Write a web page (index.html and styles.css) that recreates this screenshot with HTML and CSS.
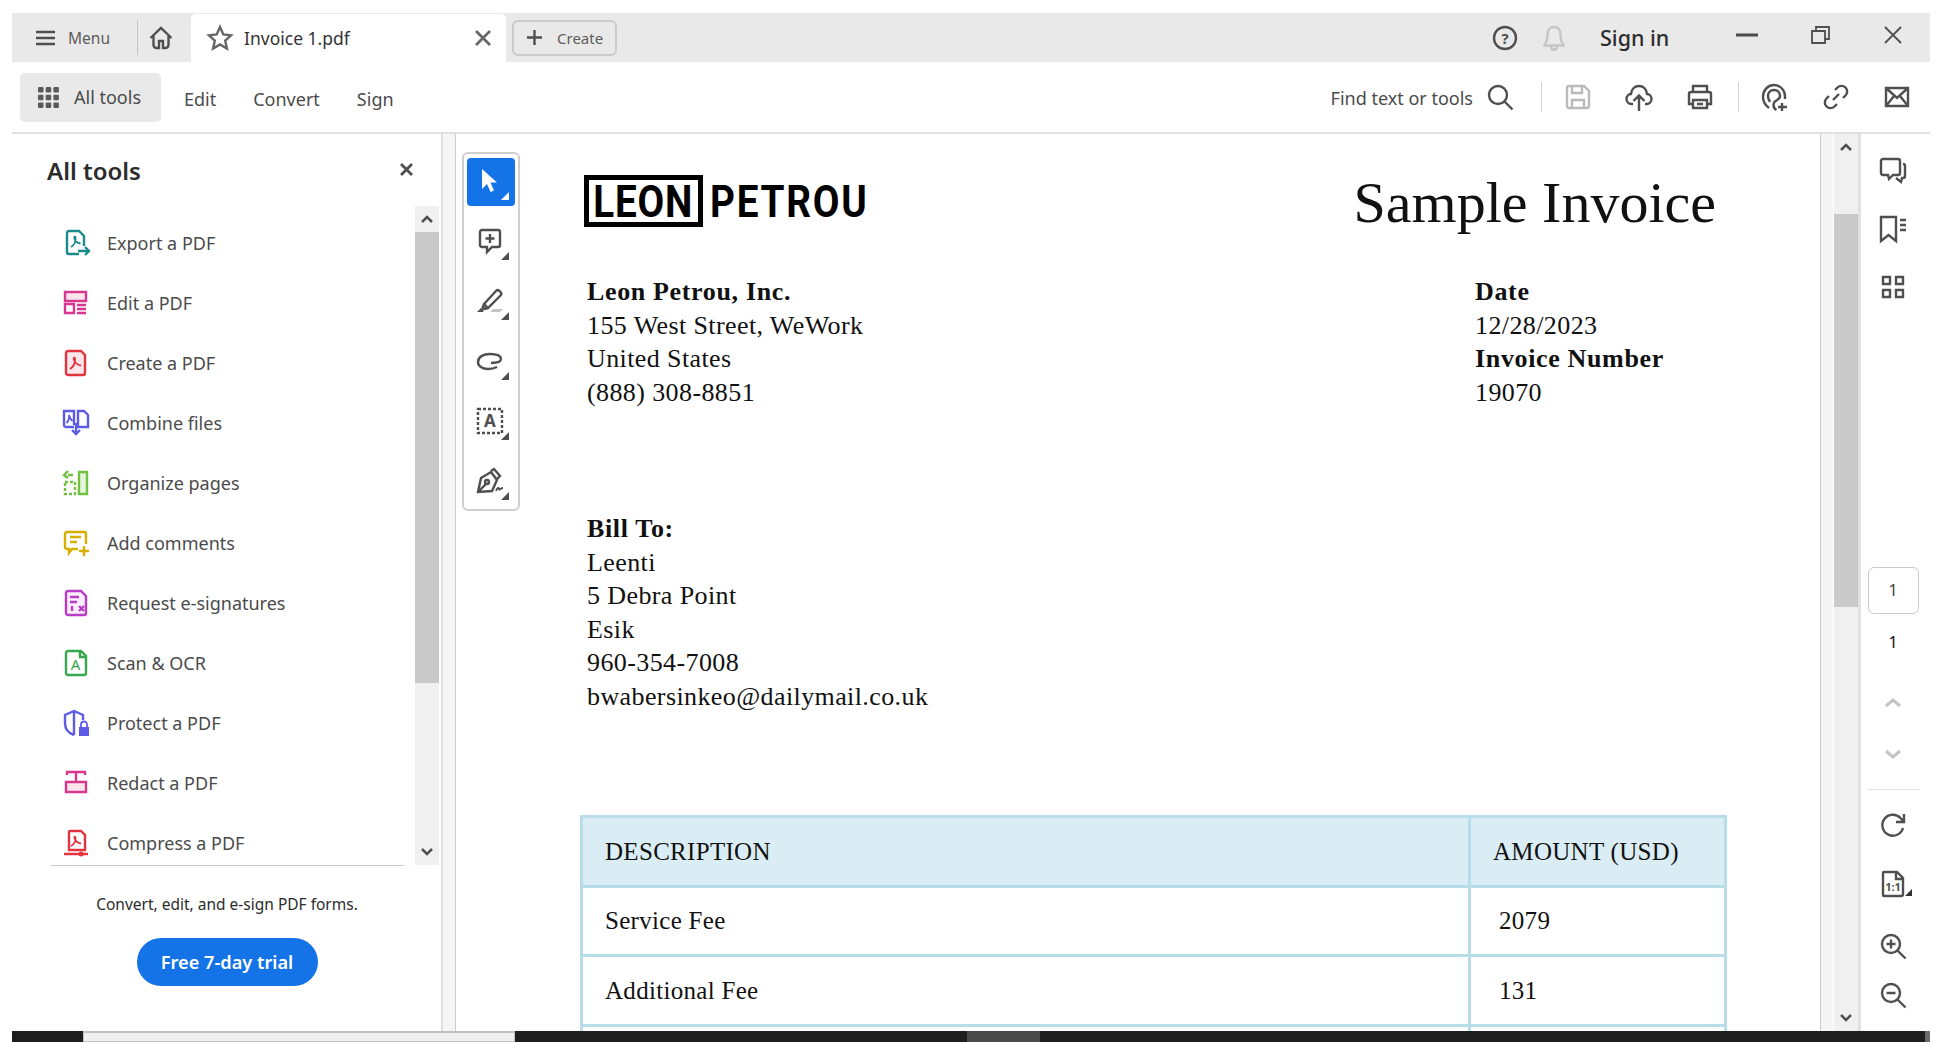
FILE: index.html
```html
<!DOCTYPE html>
<html lang="en">
<head>
    <meta charset="UTF-8">
    <title>Invoice 1.pdf</title>
    <link rel="stylesheet" href="styles.css">
</head>
<body>
<div class="app">
    <!-- tab strip -->
    <div class="tabbar">
        <svg class="ic menu-ic" width="20" height="16" viewBox="0 0 20 16"><path d="M0 2h19M0 8h19M0 14h19"/></svg>
        <span class="menu-label">Menu</span>
        <span class="tab-sep"></span>
        <svg class="ic home-ic" width="24" height="24" viewBox="0 0 24 24"><path d="M1.5 12 12 2l10.500 10M4.500 9.500V19a3 3 0 0 0 3 3H10v-7h4v7h2.500a3 3 0 0 0 3-3V9.500"/></svg>
        <div class="tab">
            <svg class="ic" width="28" height="28" viewBox="0 0 28 28"><path d="m14 3 3.300 7.500 7.700.8-5.800 5.300 1.700 8L14 20.500l-6.900 4.100 1.700-8L3 11.300l7.700-.8z"/></svg>
            <span class="tab-name">Invoice 1.pdf</span>
            <svg class="ic tab-x" width="16" height="16" viewBox="0 0 16 16"><path d="m1 1 14 14M15 1 1 15"/></svg>
        </div>
        <div class="create-btn">
            <svg class="ic" width="15" height="15" viewBox="0 0 15 15"><path d="M7.500 0v15M0 7.500h15"/></svg>
            <span>Create</span>
        </div>
        <div class="tabbar-right">
            <svg class="ic" width="28" height="28" viewBox="0 0 28 28"><circle cx="14" cy="14" r="11"/><text class="help-mark" x="14" y="19.500" text-anchor="middle">?</text></svg>
            <svg class="ic bell" width="28" height="28" viewBox="0 0 28 28"><path d="M14 3c-4.500 0-6.500 3.500-6.500 7.500 0 5-1 8-3 10v1h19v-1c-2-2-3-5-3-10C20.500 6.500 18.500 3 14 3zM11 22c0 5 6 5 6 0"/></svg>
            <span class="sign-in">Sign in</span>
            <svg class="ic win-min" width="22" height="4" viewBox="0 0 22 4"><path d="M0 2h22"/></svg>
            <svg class="ic win-max" width="19" height="18" viewBox="0 0 19 18"><path class="thin" d="M1 5h13v12H1zM5 5V1h13v12h-4"/></svg>
            <svg class="ic win-close" width="18" height="18" viewBox="0 0 18 18"><path class="thin" d="m1 1 16 16M17 1 1 17"/></svg>
        </div>
    </div>

    <!-- main toolbar -->
    <div class="toolbar">
        <div class="all-tools">
            <svg width="21" height="21" viewBox="0 0 21 21" class="grid-ic">
                <rect x="0" y="0" width="5.500" height="5.500" rx="1.200"/><rect x="7.700" y="0" width="5.500" height="5.500" rx="1.200"/><rect x="15.400" y="0" width="5.500" height="5.500" rx="1.200"/>
                <rect x="0" y="7.700" width="5.500" height="5.500" rx="1.200"/><rect x="7.700" y="7.700" width="5.500" height="5.500" rx="1.200"/><rect x="15.400" y="7.700" width="5.500" height="5.500" rx="1.200"/>
                <rect x="0" y="15.400" width="5.500" height="5.500" rx="1.200"/><rect x="7.700" y="15.400" width="5.500" height="5.500" rx="1.200"/><rect x="15.400" y="15.400" width="5.500" height="5.500" rx="1.200"/>
            </svg>
            <span>All tools</span>
        </div>
        <span class="nav-item nav-edit">Edit</span>
        <span class="nav-item nav-convert">Convert</span>
        <span class="nav-item nav-sign">Sign</span>
        <div class="toolbar-right">
            <span class="find-label">Find text or tools</span>
            <svg class="ic" width="28" height="28" viewBox="0 0 28 28"><circle cx="12" cy="12" r="9"/><path d="m18.500 18.500 8 8"/></svg>
            <span class="bar-sep"></span>
            <svg class="ic save-ic" width="28" height="28" viewBox="0 0 28 28"><path d="M5 3h15l5 5v15a2 2 0 0 1-2 2H5a2 2 0 0 1-2-2V5a2 2 0 0 1 2-2zM8 3v7h10V3M8 25v-8h12v8"/></svg>
            <svg class="ic" width="28" height="28" viewBox="0 0 28 28"><path d="M8 21H6.500C3.500 21 1.500 18.500 1.500 16c0-2.800 2-4.800 4.500-5C6.500 6 9.800 3 14 3s7.500 3 8 8c2.500.2 4.500 2.200 4.500 5 0 2.500-2 5-5 5H20M14 28V13M8.500 18l5.500-5.500 5.500 5.500"/></svg>
            <svg class="ic" width="28" height="28" viewBox="0 0 28 28"><path d="M7 9V3h14v6M7 21H3V11a2 2 0 0 1 2-2h18a2 2 0 0 1 2 2v10h-4M7 17h14v8H7zM11 21h6"/></svg>
            <span class="bar-sep sep-two"></span>
            <svg class="ic" width="28" height="28" viewBox="0 0 28 28"><path d="M8 25C4 22 2 19 2 14 2 7 7 2 13 2s11 5 11 11v3M9 19c-1-2-2-3.500-2-6 0-3.500 2.500-6 6-6s6 2.500 6 6c0 2-1 3-3 4-2 1-3.500 2.500-3.500 5 0 2 1 4 3 5M21 20v8M17 24h9"/></svg>
            <svg class="ic" width="28" height="28" viewBox="0 0 28 28"><path d="m11 17 6-6M13 7l2.500-2.500a5.500 5.500 0 0 1 8 8L21 15M15 21l-2.500 2.500a5.500 5.500 0 0 1-8-8L7 13"/></svg>
            <svg class="ic" width="28" height="28" viewBox="0 0 28 28"><path d="M3 5h22v18H3zM3 5l11 10L25 5M3 23l8-10M25 23l-8-10"/></svg>
        </div>
    </div>

    <div class="main">
        <!-- all tools panel -->
        <aside class="panel">
            <div class="panel-head">
                <h2>All tools</h2>
                <svg class="ic panel-x" width="13" height="13" viewBox="0 0 13 13"><path d="m1 1 11 11M12 1 1 12"/></svg>
            </div>
            <div class="panel-body">
                <ul class="tool-list">
                    <li>
                        <svg class="ic tc-teal" width="28" height="28" viewBox="0 0 28 28"><path d="M22 17V7l-5-5H7a2 2 0 0 0-2 2v19a2 2 0 0 0 2 2h10"/><path class="tint" d="M17 24l5-7v3l-5 4z"/><path class="thin" d="M9 18c3-2 5-6 4.500-9.500-.3-1.500-1.700-1-1.200.5.600 2.500 3 5 6.200 5.500"/><path d="M16 22h11M23 18l4 4-4 4"/></svg>
                        <span>Export a PDF</span>
                    </li>
                    <li>
                        <svg class="ic tc-pink" width="28" height="28" viewBox="0 0 28 28"><path class="tinted" d="M3 3h21v9H3z"/><path d="M3 15h9v9H3zM15 16h9M15 20h9M15 24h9"/></svg>
                        <span>Edit a PDF</span>
                    </li>
                    <li>
                        <svg class="ic tc-red" width="28" height="28" viewBox="0 0 28 28"><path class="tinted" d="M6 2h13l4 4v18a2 2 0 0 1-2 2H6a2 2 0 0 1-2-2V4a2 2 0 0 1 2-2z"/><path class="thin" d="M8 20c3-2 5.500-6 5-10.500-.3-1.500-1.700-1-1.200.5.600 3 3.500 6 7.200 6.500"/></svg>
                        <span>Create a PDF</span>
                    </li>
                    <li>
                        <svg class="ic tc-purple" width="28" height="28" viewBox="0 0 28 28"><path d="M12 18H4a2 2 0 0 1-2-2V2h10v14M16 18h10V6l-4-4h-6zM14 14v11M10 21l4 4 4-4"/><path class="thin" d="M4.500 14c2-2 3-4 2.500-8 1 3 2 5 3.500 6"/></svg>
                        <span>Combine files</span>
                    </li>
                    <li>
                        <svg class="ic tc-green" width="28" height="28" viewBox="0 0 28 28"><path class="tinted" d="M17 3h8v22h-8z"/><path d="M11 6H6M6 2 2 6l4 3"/><path class="dash" d="M3 13h10v12H3z"/></svg>
                        <span>Organize pages</span>
                    </li>
                    <li>
                        <svg class="ic tc-yellow" width="28" height="28" viewBox="0 0 28 28"><path d="M16 20h-6l-3 4v-4H5a2 2 0 0 1-2-2V5a2 2 0 0 1 2-2h17a2 2 0 0 1 2 2v10M8 8h11M8 13h7M22 17v10M17 22h10"/></svg>
                        <span>Add comments</span>
                    </li>
                    <li>
                        <svg class="ic tc-violet" width="28" height="28" viewBox="0 0 28 28"><path class="tint-soft" d="M6 2h13l5 5v17a2 2 0 0 1-2 2H6a2 2 0 0 1-2-2V4a2 2 0 0 1 2-2z"/><path d="M8 8h9M8 13h7M10 17v5M17 17l5 5M22 17l-5 5"/></svg>
                        <span>Request e-signatures</span>
                    </li>
                    <li>
                        <svg class="ic tc-scan" width="28" height="28" viewBox="0 0 28 28"><path d="M6 2h13l5 5v17a2 2 0 0 1-2 2H6a2 2 0 0 1-2-2V4a2 2 0 0 1 2-2zM18 2v6h6"/><text class="icon-letter" x="13.500" y="21" text-anchor="middle">A</text></svg>
                        <span>Scan &amp; OCR</span>
                    </li>
                    <li>
                        <svg class="ic tc-purple" width="28" height="28" viewBox="0 0 28 28"><path d="M12 26C6 24 3 20 3 14V6l9-4 9 4v5M12 2v24"/><path class="solid" d="M17 18h10v9H17z"/><path class="thin" d="M19 18v-2.500a3 3 0 0 1 6 0V18"/></svg>
                        <span>Protect a PDF</span>
                    </li>
                    <li>
                        <svg class="ic tc-pink" width="28" height="28" viewBox="0 0 28 28"><path d="M5 6V3h18v3M14 3v10"/><path class="tinted" d="M4 13h20v10H4z"/></svg>
                        <span>Redact a PDF</span>
                    </li>
                    <li>
                        <svg class="ic tc-red" width="28" height="28" viewBox="0 0 28 28"><path d="M7 21V3a1 1 0 0 1 1-1h11l4 4v15zM2 25h24"/><path class="thin" d="M9 17c3-2 5-5 4.500-8.500-.3-1.200-1.500-1-1 .5.600 2.500 3 5 6.500 5.500"/><circle class="solid" cx="19" cy="25" r="2.500"/></svg>
                        <span>Compress a PDF</span>
                    </li>
                </ul>
                <div class="scrollbar panel-scroll">
                    <span class="sb-btn"><svg class="chev" width="12" height="8" viewBox="0 0 12 8"><path d="m1 7 5-5 5 5"/></svg></span>
                    <span class="sb-thumb"></span>
                    <span class="sb-rest"></span>
                    <span class="sb-btn"><svg class="chev" width="12" height="8" viewBox="0 0 12 8"><path d="m1 1 5 5 5-5"/></svg></span>
                </div>
            </div>
            <div class="panel-foot">
                <p>Convert, edit, and e-sign PDF forms.</p>
                <span class="trial-btn">Free 7-day trial</span>
            </div>
        </aside>
        <div class="gutter"></div>

        <!-- document -->
        <div class="doc-pane">
            <div class="palette">
                <div class="tool tool-on">
                    <svg width="22" height="26" viewBox="0 0 22 26"><path class="cursor" d="M3 1v20l5-5 3.500 8 3.500-1.500-3.500-8H18z"/></svg>
                </div>
                <div class="tool">
                    <svg class="ic" width="28" height="28" viewBox="0 0 28 28"><path d="M6 3h16a2 2 0 0 1 2 2v13a2 2 0 0 1-2 2h-6l-5 5v-5H6a2 2 0 0 1-2-2V5a2 2 0 0 1 2-2zM14 7v9M9.500 11.500h9"/></svg>
                </div>
                <div class="tool">
                    <svg class="ic" width="28" height="28" viewBox="0 0 28 28"><path d="m8 17 12-13a2.500 2.500 0 0 1 3.500 0l1 1a2.500 2.500 0 0 1 0 3.500L12 21zM8 17l-1 3 2 2 3-1"/><path class="solid" d="M1 25l5-5 2 3-1 2z"/><path class="shade" d="M14 25l3-3h10l-3 3z"/></svg>
                </div>
                <div class="tool">
                    <svg class="ic" width="28" height="28" viewBox="0 0 28 28"><path d="M21 20c-3 1.500-6 2-9 2C6 22 2 19 2 15c0-5 5-8 12-8 6 0 11 1 11 5 0 3-5 4-10 4"/></svg>
                </div>
                <div class="tool">
                    <svg class="ic" width="28" height="28" viewBox="0 0 28 28"><path class="dash" d="M2 2h24v24H2z"/><text class="icon-letter dark" x="14" y="20" text-anchor="middle">A</text></svg>
                </div>
                <div class="tool">
                    <svg class="ic" width="28" height="28" viewBox="0 0 28 28"><path d="M2 25 5 11l10-6 6 8-5 11zM2 25l8-8M15 4l3-2 6 7-3 3"/><circle cx="11" cy="15" r="2"/><path class="thin" d="M20 24c1-3 3-4 3-2s2-1 4-1"/></svg>
                </div>
            </div>

            <div class="page">
                <div class="page-top">
                    <div class="logo">
                        <span class="logo-box"><span class="logo-word">LEON</span></span>
                        <span class="logo-rest"><span class="logo-word">PETROU</span></span>
                    </div>
                    <h1>Sample Invoice</h1>
                </div>
                <div class="addr-row">
                    <div>
                        <div class="line-b">Leon Petrou, Inc.</div>
                        <div>155 West Street, WeWork</div>
                        <div>United States</div>
                        <div>(888) 308-8851</div>
                    </div>
                    <div>
                        <div class="line-b">Date</div>
                        <div>12/28/2023</div>
                        <div class="line-b">Invoice Number</div>
                        <div>19070</div>
                    </div>
                </div>
                <div class="bill-to">
                    <div class="line-b">Bill To:</div>
                    <div>Leenti</div>
                    <div>5 Debra Point</div>
                    <div>Esik</div>
                    <div>960-354-7008</div>
                    <div>bwabersinkeo@dailymail.co.uk</div>
                </div>
                <table class="inv">
                    <thead>
                        <tr><th>DESCRIPTION</th><th>AMOUNT (USD)</th></tr>
                    </thead>
                    <tbody>
                        <tr><td>Service Fee</td><td class="amt">2079</td></tr>
                        <tr><td>Additional Fee</td><td class="amt">131</td></tr>
                        <tr><td>&nbsp;</td><td class="amt">&nbsp;</td></tr>
                    </tbody>
                </table>
            </div>
        </div>

        <div class="doc-gutter"></div>
        <div class="scrollbar doc-scroll">
            <span class="sb-btn"><svg class="chev" width="12" height="8" viewBox="0 0 12 8"><path d="m1 7 5-5 5 5"/></svg></span>
            <span class="sb-thumb"></span>
            <span class="sb-rest"></span>
            <span class="sb-btn"><svg class="chev" width="12" height="8" viewBox="0 0 12 8"><path d="m1 1 5 5 5-5"/></svg></span>
        </div>

        <!-- right rail -->
        <div class="rail">
            <svg class="ic r-comment" width="28" height="28" viewBox="0 0 28 28"><path d="M4 2h15a2 2 0 0 1 2 2v12a2 2 0 0 1-2 2h-5l-4 4-1-4H4a2 2 0 0 1-2-2V4a2 2 0 0 1 2-2zM24 7c1 0 2 1 2 2v10c0 1-1 2-2 2h-1l-1 4-5-4"/></svg>
            <svg class="ic r-mark" width="28" height="28" viewBox="0 0 28 28"><path d="M2 2h15v24l-7.500-6L2 26zM21 5h6M21 10h6M21 15h6"/></svg>
            <svg class="ic r-mark" width="28" height="28" viewBox="0 0 28 28"><path d="M4 4h7v7H4zM17 4h7v7h-7zM4 17h7v7H4zM17 17h7v7h-7z"/></svg>
            <div class="page-box">1</div>
            <div class="page-count">1</div>
            <svg class="chev-lg r-up" width="16" height="14" viewBox="0 0 16 14"><path d="m1 10 7-6 7 6"/></svg>
            <svg class="chev-lg r-down" width="16" height="14" viewBox="0 0 16 14"><path d="m1 4 7 6 7-6"/></svg>
            <div class="rail-line"></div>
            <svg class="ic r-rotate" width="28" height="28" viewBox="0 0 28 28"><path d="M24 17a10.500 10.500 0 1 1-2.500-10L25 11M25 3v8h-8"/></svg>
            <svg class="ic r-fit" width="28" height="28" viewBox="0 0 28 28"><path d="M5 2h13l6 6v16a2 2 0 0 1-2 2H5a1 1 0 0 1-1-1V3a1 1 0 0 1 1-1zM17 2v7h7"/><text class="fit-text" x="14" y="21" text-anchor="middle">1:1</text><path class="solid" d="M33 19v7h-7z"/></svg>
            <svg class="ic r-zoom" width="28" height="28" viewBox="0 0 28 28"><circle cx="12" cy="12" r="9"/><path d="m18.500 18.500 8 8M12 7.500v9M7.500 12h9"/></svg>
            <svg class="ic r-zoom2" width="28" height="28" viewBox="0 0 28 28"><circle cx="12" cy="12" r="9"/><path d="m18.500 18.500 8 8M7.500 12h9"/></svg>
        </div>
    </div>

    <!-- taskbar sliver at the bottom of the capture -->
    <div class="taskbar">
        <span class="tb-a"></span>
        <span class="tb-win"></span>
        <span class="tb-b"></span>
        <span class="tb-hi"></span>
        <span class="tb-c"></span>
        <span class="tb-end"></span>
    </div>
</div>
</body>
</html>
```

FILE: styles.css
```css
* {
    box-sizing: border-box;
}
html, body {
    margin: 0;
    height: 100%;
    background: white;
    overflow: hidden;
}
body {
    font-family: "Noto Sans", sans-serif;
    color: #4b4b4b;
}
.app {
    height: 1042px;
    padding: 13px 12px 0;
    display: flex;
    flex-direction: column;
}

/* shared icon styles */
.ic {
    fill: none;
    stroke: #4f4f4f;
    stroke-width: 2.400;
    flex: none;
    overflow: visible;
}
.ic .thin {
    stroke-width: 1.800;
}
.ic .solid {
    fill: currentColor;
    stroke: none;
}
.ic .dash {
    stroke-dasharray: 3 2;
}
.ic text {
    stroke: none;
    fill: currentColor;
    font-family: "Noto Sans", sans-serif;
}
.help-mark {
    font-size: 15px;
    font-weight: 700;
    fill: #505050 !important;
}
.icon-letter {
    font-size: 15px;
}
.icon-letter.dark {
    font-size: 17px;
    font-weight: 700;
    fill: #505050 !important;
}
.fit-text {
    font-size: 11px;
    font-weight: 700;
    fill: #505050 !important;
}

/* tab strip */
.tabbar {
    height: 49px;
    background: #e9e9e9;
    display: flex;
    align-items: center;
    padding-left: 24px;
}
.menu-label {
    font-size: 15.500px;
    margin-left: 12px;
    width: 58px;
    color: #5c5c5c;
}
.tab-sep {
    width: 1px;
    height: 35px;
    background: #c4c4c4;
    margin-left: 11px;
}
.home-ic {
    margin-left: 11px;
}
.tab {
    align-self: flex-end;
    height: 48px;
    width: 315px;
    margin-left: 18px;
    background: white;
    border-radius: 5px 5px 0 0;
    display: flex;
    align-items: center;
    padding-left: 15px;
}
.tab .ic {
    stroke: #666;
}
.tab-name {
    font-size: 17.500px;
    color: #333;
    margin-left: 10px;
}
.tab-x {
    margin-left: auto;
    margin-right: 15px;
    stroke-width: 2.800;
}
.create-btn {
    margin-left: 6px;
    width: 105px;
    height: 36px;
    border: 2px solid #cbcbcb;
    border-radius: 6px;
    display: flex;
    align-items: center;
    padding-left: 13px;
    font-size: 15px;
    color: #5c5c5c;
    gap: 15px;
}
.tabbar-right {
    margin-left: auto;
    display: flex;
    align-items: center;
    padding-right: 28px;
}
.bell {
    margin-left: 21px;
    stroke: #c6c6c6;
}
.sign-in {
    margin-left: 32px;
    font-size: 21.500px;
    font-weight: 500;
    color: #2c2c2c;
    width: 71px;
    white-space: nowrap;
}
.win-min {
    margin-left: 65px;
    margin-bottom: 5px;
    stroke: #4b4b4b;
    stroke-width: 3;
}
.win-max {
    margin-left: 53px;
    margin-bottom: 5px;
}
.win-close {
    margin-left: 54px;
    margin-bottom: 5px;
}

/* main toolbar */
.toolbar {
    height: 70px;
    display: flex;
    align-items: center;
    padding-left: 8px;
    font-size: 18px;
}
.all-tools {
    width: 141px;
    height: 49px;
    background: #e9e9e9;
    border-radius: 5px;
    display: flex;
    align-items: center;
    padding-left: 18px;
    gap: 15px;
    color: #4b4b4b;
}
.nav-item {
    padding-top: 3px;
}
.grid-ic {
    fill: #5a5a5a;
}
.nav-edit {
    margin-left: 23px;
}
.nav-convert {
    margin-left: 37px;
}
.nav-sign {
    margin-left: 37px;
}
.toolbar-right {
    margin-left: auto;
    display: flex;
    align-items: center;
    gap: 33px;
    padding-right: 19px;
}
.find-label {
    margin-right: -20px;
    padding-top: 2px;
}
.bar-sep {
    width: 1px;
    height: 30px;
    background: #d4d4d4;
    margin: 0 -11px 0 -6px;
}
.sep-two {
    margin: 0 -11px 0 -9px;
}
.save-ic {
    stroke: #b9b9b9;
}

/* body of the window */
.main {
    flex: 1;
    min-height: 0;
    display: flex;
    border-top: 2px solid #e1e1e1;
}

/* all tools panel */
.panel {
    width: 429px;
    display: flex;
    flex-direction: column;
}
.panel-head {
    height: 72px;
    padding: 0 28px 0 35px;
    display: flex;
    align-items: center;
    justify-content: space-between;
}
.panel-head h2 {
    margin: 0;
    font-size: 24px;
    font-weight: 600;
    color: #2c2c2c;
}
.panel-x {
    stroke-width: 2.800;
    margin-bottom: 2px;
}
.panel-body {
    height: 659px;
    display: flex;
    justify-content: space-between;
    padding-right: 2px;
}
.tool-list {
    list-style: none;
    margin: 0;
    padding: 7px 0 0 50px;
    overflow: hidden;
}
.tool-list li {
    height: 60px;
    display: flex;
    align-items: center;
    gap: 17px;
    font-size: 18px;
    color: #4b4b4b;
}
.tc-teal { color: #1a8b8b; }
.tc-pink { color: #d83790; }
.tc-red { color: #e1343f; }
.tc-purple { color: #5d5ce6; }
.tc-green { color: #6fc13f; }
.tc-yellow { color: #d7ad00; }
.tc-violet { color: #b93dc4; }
.tc-scan { color: #36a84f; }
.tool-list .ic {
    stroke: currentColor;
}
.ic .tint {
    fill: #d7ecec;
    stroke: none;
}
.ic .tinted {
    fill: #fbe6ec;
}
.tc-green .tinted {
    fill: #e6f5dc;
}
.ic .tint-soft {
    fill: #fbeefc;
}
.scrollbar {
    width: 24px;
    background: #f0f0f0;
    display: flex;
    flex-direction: column;
    flex: none;
}
.sb-btn {
    height: 26px;
    display: flex;
    align-items: center;
    justify-content: center;
    flex: none;
}
.chev {
    fill: none;
    stroke: #505050;
    stroke-width: 2.500;
}
.sb-thumb {
    background: #c9c9c9;
    flex: none;
}
.sb-rest {
    flex: 1;
}
.panel-scroll .sb-thumb {
    height: 451px;
}
.panel-foot {
    margin: 0 37px 0 38px;
    border-top: 1px solid #cccccc;
    text-align: center;
    flex: 1;
}
.panel-foot p {
    margin: 26px 0 0;
    font-size: 15.500px;
    line-height: 24px;
    color: #2c2c2c;
}
.trial-btn {
    display: inline-block;
    margin-top: 22px;
    width: 181px;
    height: 48px;
    line-height: 48px;
    background: #1473e6;
    border-radius: 24px;
    color: white;
    font-size: 18.200px;
    font-weight: 600;
}
.gutter {
    width: 15px;
    background: #f5f5f5;
    border-left: 2px solid #e0e0e0;
    border-right: 1px solid #cccccc;
}

/* document pane */
.doc-pane {
    flex: 1;
    min-width: 0;
    display: flex;
    align-items: flex-start;
    overflow: hidden;
    padding: 18px 0 0 6px;
}
.palette {
    width: 58px;
    height: 359px;
    flex: none;
    border: 2px solid #cfcfcf;
    border-radius: 6px;
    padding: 4px 3px;
    display: flex;
    flex-direction: column;
    gap: 12px;
}
.tool {
    position: relative;
    width: 48px;
    height: 48px;
    flex: none;
    border-radius: 4px;
    display: flex;
    align-items: center;
    justify-content: center;
}
.tool svg {
    margin: -2px 2px 0 0;
}
.tool::after {
    content: "";
    position: absolute;
    right: 6px;
    bottom: 6px;
    width: 8px;
    height: 8px;
    background: #505050;
    clip-path: polygon(100% 0, 100% 100%, 0 100%);
}
.tool-on {
    background: #1473e6;
}
.tool-on::after {
    background: white;
}
.cursor {
    fill: white;
}
.ic .shade {
    fill: #c4c4c4;
    stroke: none;
}
.tool .ic {
    color: #505050;
}

/* the PDF page */
.page {
    width: 1147px;
    margin: 23px 0 0 60px;
    flex: none;
    font-family: "Liberation Serif", serif;
    color: #111;
    font-size: 26px;
    line-height: 33.500px;
    letter-spacing: 0.400px;
}
.page-top {
    height: 52px;
    padding: 0 11px 0 4px;
    display: flex;
    justify-content: space-between;
    letter-spacing: 0;
}
.logo {
    display: flex;
    align-items: center;
    font-family: "Roboto", sans-serif;
    font-weight: 700;
    color: black;
    font-size: 45px;
    line-height: 1;
}
.logo-box {
    width: 119px;
    height: 52px;
    border: 5px solid black;
    display: flex;
    align-items: center;
    justify-content: center;
    letter-spacing: 1px;
}
.logo-box .logo-word {
    transform-origin: center;
}
.logo-word {
    display: inline-block;
    transform: scaleX(0.860);
    transform-origin: left;
}
.logo-rest {
    margin-left: 7px;
    letter-spacing: 2px;
}
h1 {
    margin: -2px 0 0;
    font-size: 58px;
    line-height: 60px;
    font-weight: 400;
    color: #111;
}
.addr-row {
    margin-top: 48px;
    padding-left: 7px;
    display: grid;
    grid-template-columns: 1fr 252px;
}
.line-b {
    font-weight: 700;
    letter-spacing: 0.650px;
}
.bill-to {
    margin-top: 103px;
    padding-left: 7px;
}
.inv {
    margin-top: 102px;
    width: 1147px;
    border-collapse: collapse;
    table-layout: fixed;
    border: 3px solid #b7dde8;
    font-size: 25px;
    letter-spacing: 0.300px;
}
.inv th, .inv td {
    border: 3px solid #b7dde8;
    height: 69.500px;
    padding: 0 0 0 22px;
    text-align: left;
    font-weight: 400;
}
.inv th {
    background: #daedf4;
}
.inv th:first-child, .inv td:first-child {
    width: 888px;
}
.inv .amt {
    padding-left: 28px;
}

/* scrollbar beside the document */
.doc-gutter {
    width: 14px;
    background: #f5f5f5;
    border-left: 1px solid #cccccc;
    border-right: 1px solid white;
}
.doc-scroll .sb-thumb {
    height: 393px;
    margin-top: 54px;
}

/* right rail */
.rail {
    width: 72px;
    flex: none;
    border-left: 3px solid #e1e1e1;
    display: flex;
    flex-direction: column;
    align-items: center;
    padding: 23px 5px 0 0;
    color: #333;
}
.r-mark {
    margin-top: 30px;
}
.page-box {
    width: 51px;
    height: 47px;
    margin-top: 266px;
    border: 1px solid #cccccc;
    border-radius: 6px;
    text-align: center;
    line-height: 45px;
    font-size: 16px;
    color: #444;
    flex: none;
}
.page-count {
    margin-top: 18px;
    height: 20px;
    line-height: 20px;
    font-size: 16px;
    color: #111;
}
.chev-lg {
    fill: none;
    stroke: #c4c4c4;
    stroke-width: 3;
    flex: none;
}
.r-up {
    margin-top: 44px;
}
.r-down {
    margin-top: 37px;
}
.rail-line {
    width: 53px;
    height: 1px;
    background: #e1e1e1;
    margin-top: 28px;
    flex: none;
}
.r-rotate {
    margin-top: 21px;
}
.r-fit {
    margin-top: 31px;
}
.r-zoom {
    margin-top: 34px;
}
.r-zoom2 {
    margin-top: 21px;
}

/* taskbar */
.taskbar {
    height: 11px;
    flex: none;
    display: flex;
    background: #1e1e1e;
}
.tb-a {
    width: 71px;
}
.tb-win {
    width: 432px;
    background: #f0f0f0;
    border: 1px solid #c0c0c0;
    border-top-width: 2px;
}
.tb-b {
    width: 452px;
}
.tb-hi {
    width: 73px;
    background: #4a4a4a;
}
.tb-c {
    flex: 1;
}
.tb-end {
    width: 5px;
    background: #6a6a6a;
}
```
